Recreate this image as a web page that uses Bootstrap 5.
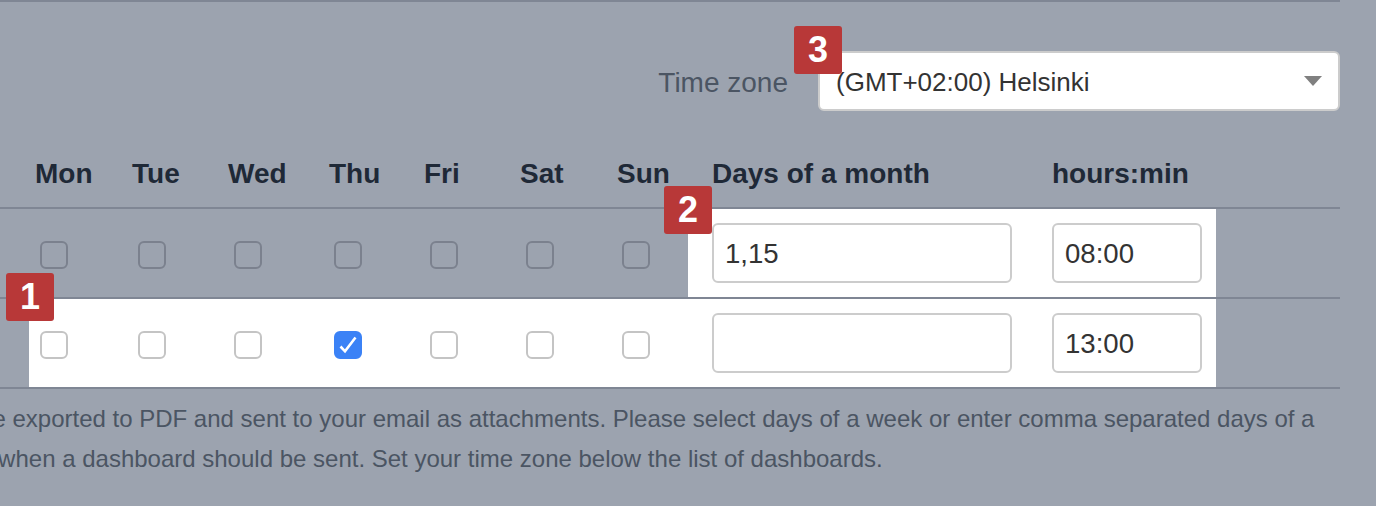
<!DOCTYPE html>
<html lang="en">
<head>
    <meta charset="UTF-8">
    <meta name="viewport" content="width=device-width, initial-scale=1.0">
    <title>Scheduled dashboards</title>
    <link rel="stylesheet" href="https://cdn.jsdelivr.net/npm/bootstrap@5.3.3/dist/css/bootstrap.min.css">
    <style>
        html, body {
            height: 100%;
        }

        body {
            background: #9ca3af;
            font-family: "Liberation Sans", Arial, sans-serif;
            overflow: hidden;
        }

        .page-wrap {
            position: relative;
            width: 1340px;
            height: 506px;
            border-top: 2px solid #7f8694;
        }

        .zone-row {
            height: 143px;
            padding-top: 49px;
            align-items: flex-start;
        }

        .zone-label {
            margin-top: 14px;
            margin-right: 30px;
            font-size: 28px;
            line-height: 36px;
            color: #4b5563;
        }

        .zone-select.form-select {
            width: 522px;
            height: 60px;
            padding: 2px 50px 0 16px;
            font-size: 26px;
            color: #333;
            border: 2px solid #ccc;
            border-radius: 6px;
            background-image: url("data:image/svg+xml,%3csvg xmlns='http://www.w3.org/2000/svg' viewBox='0 0 18 10'%3e%3cpath fill='%23808080' d='M0 0h18L9 10z'/%3e%3c/svg%3e");
            background-position: right 16px center;
            background-size: 18px 10px;
        }

        .schedule-table {
            table-layout: fixed;
            width: 1340px;
            margin: 0;
            border-collapse: separate;
            border-spacing: 0;
            --bs-table-bg: transparent;
            --bs-table-color: #1f2937;
        }

        .schedule-table th,
        .schedule-table td {
            padding: 0;
            border-bottom: 2px solid #7f8694;
            vertical-align: middle;
        }

        .schedule-table th {
            height: 64px;
            padding-bottom: 4px;
            font-size: 28px;
            line-height: 36px;
            color: #1f2937;
            padding-left: 6px;
            white-space: nowrap;
        }

        .schedule-table th.wide-head {
            padding-left: 24px;
        }

        .schedule-table th.time-head {
            padding-left: 0;
        }

        .schedule-table td {
            height: 90px;
            padding-left: 11px;
        }

        .schedule-table td.box-cell {
            padding-top: 4px;
        }

        .schedule-table td.box-nudge {
            padding-left: 12px;
        }

        .schedule-table td.lit {
            background: #fff;
        }

        .schedule-table td.days-cell {
            padding-left: 24px;
        }

        .schedule-table td.time-cell {
            padding-left: 0;
        }

        .day-box.form-check-input {
            display: block;
            width: 28px;
            height: 28px;
            margin: 0;
            border: 2px solid #c4c4c4;
            border-radius: 6px;
        }

        .day-box.form-check-input:checked {
            background-color: #3b82f6;
            border-color: #3b82f6;
            background-image: url("data:image/svg+xml,%3csvg xmlns='http://www.w3.org/2000/svg' viewBox='0 0 28 28'%3e%3cpath fill='none' stroke='%23fff' stroke-width='2.6' d='M6.5 15.5l4.5 4.8L21.5 6.5'/%3e%3c/svg%3e");
            background-origin: border-box;
            background-size: 28px 28px;
        }

        .day-box.dimmed {
            background-color: #9ca3af;
            border-color: #7b818e;
        }

        .cell-input.form-control {
            height: 60px;
            padding: 2px 11px 0;
            font-size: 27.6px;
            color: #333;
            border: 2px solid #ccc;
            border-radius: 6px;
        }

        .days-input {
            width: 300px;
        }

        .time-input {
            width: 150px;
        }

        .help-note {
            margin: 10px 0 0 -214px;
            width: 1600px;
            font-size: 24px;
            line-height: 40px;
            text-indent: 17px;
            color: #4b5563;
            white-space: nowrap;
        }

        .step-tag {
            position: absolute;
            width: 48px;
            height: 48px;
            border-radius: 3px;
            background: #b83838;
            color: #fff;
            font-size: 36px;
            font-weight: 700;
            line-height: 48px;
            text-align: center;
        }

        .step-one { left: 6px; top: 271px; }
        .step-two { left: 664px; top: 184px; }
        .step-three { left: 794px; top: 24px; }
    </style>
</head>
<body>

    <div class="page-wrap">
        <div class="zone-row d-flex justify-content-end">
            <label class="zone-label" for="zone">Time zone</label>
            <select id="zone" class="zone-select form-select">
                <option>(GMT+02:00) Helsinki</option>
            </select>
        </div>

        <table class="schedule-table table">
            <colgroup>
                <col style="width: 29px">
                <col style="width: 97px">
                <col style="width: 96px">
                <col style="width: 101px">
                <col style="width: 95px">
                <col style="width: 96px">
                <col style="width: 97px">
                <col style="width: 77px">
                <col style="width: 364px">
                <col style="width: 164px">
                <col>
            </colgroup>
            <thead>
                <tr>
                    <th></th>
                    <th>Mon</th>
                    <th>Tue</th>
                    <th>Wed</th>
                    <th>Thu</th>
                    <th>Fri</th>
                    <th>Sat</th>
                    <th>Sun</th>
                    <th class="wide-head">Days of a month</th>
                    <th class="time-head">hours:min</th>
                    <th></th>
                </tr>
            </thead>
            <tbody>
                <tr>
                    <td></td>
                    <td class="box-cell"><input class="day-box dimmed form-check-input" type="checkbox"></td>
                    <td class="box-cell box-nudge"><input class="day-box dimmed form-check-input" type="checkbox"></td>
                    <td class="box-cell box-nudge"><input class="day-box dimmed form-check-input" type="checkbox"></td>
                    <td class="box-cell"><input class="day-box dimmed form-check-input" type="checkbox"></td>
                    <td class="box-cell box-nudge"><input class="day-box dimmed form-check-input" type="checkbox"></td>
                    <td class="box-cell box-nudge"><input class="day-box dimmed form-check-input" type="checkbox"></td>
                    <td class="box-cell"><input class="day-box dimmed form-check-input" type="checkbox"></td>
                    <td class="lit days-cell"><input class="cell-input days-input form-control" type="text" value="1,15"></td>
                    <td class="lit time-cell"><input class="cell-input time-input form-control" type="text" value="08:00"></td>
                    <td></td>
                </tr>
                <tr>
                    <td></td>
                    <td class="lit box-cell"><input class="day-box form-check-input" type="checkbox"></td>
                    <td class="lit box-cell box-nudge"><input class="day-box form-check-input" type="checkbox"></td>
                    <td class="lit box-cell box-nudge"><input class="day-box form-check-input" type="checkbox"></td>
                    <td class="lit box-cell"><input class="day-box form-check-input" type="checkbox" checked></td>
                    <td class="lit box-cell box-nudge"><input class="day-box form-check-input" type="checkbox"></td>
                    <td class="lit box-cell box-nudge"><input class="day-box form-check-input" type="checkbox"></td>
                    <td class="lit box-cell"><input class="day-box form-check-input" type="checkbox"></td>
                    <td class="lit days-cell"><input class="cell-input days-input form-control" type="text"></td>
                    <td class="lit time-cell"><input class="cell-input time-input form-control" type="text" value="13:00"></td>
                    <td></td>
                </tr>
            </tbody>
        </table>

        <p class="help-note">Dashboards will be exported to PDF and sent to your email as attachments. Please select days of a week or enter comma separated days of a<br>month and the time when a dashboard should be sent. Set your time zone below the list of dashboards.</p>

        <div class="step-tag step-one">1</div>
        <div class="step-tag step-two">2</div>
        <div class="step-tag step-three">3</div>
    </div>

    <script src="https://cdn.jsdelivr.net/npm/bootstrap@5.3.3/dist/js/bootstrap.bundle.min.js"></script>
</body>
</html>
